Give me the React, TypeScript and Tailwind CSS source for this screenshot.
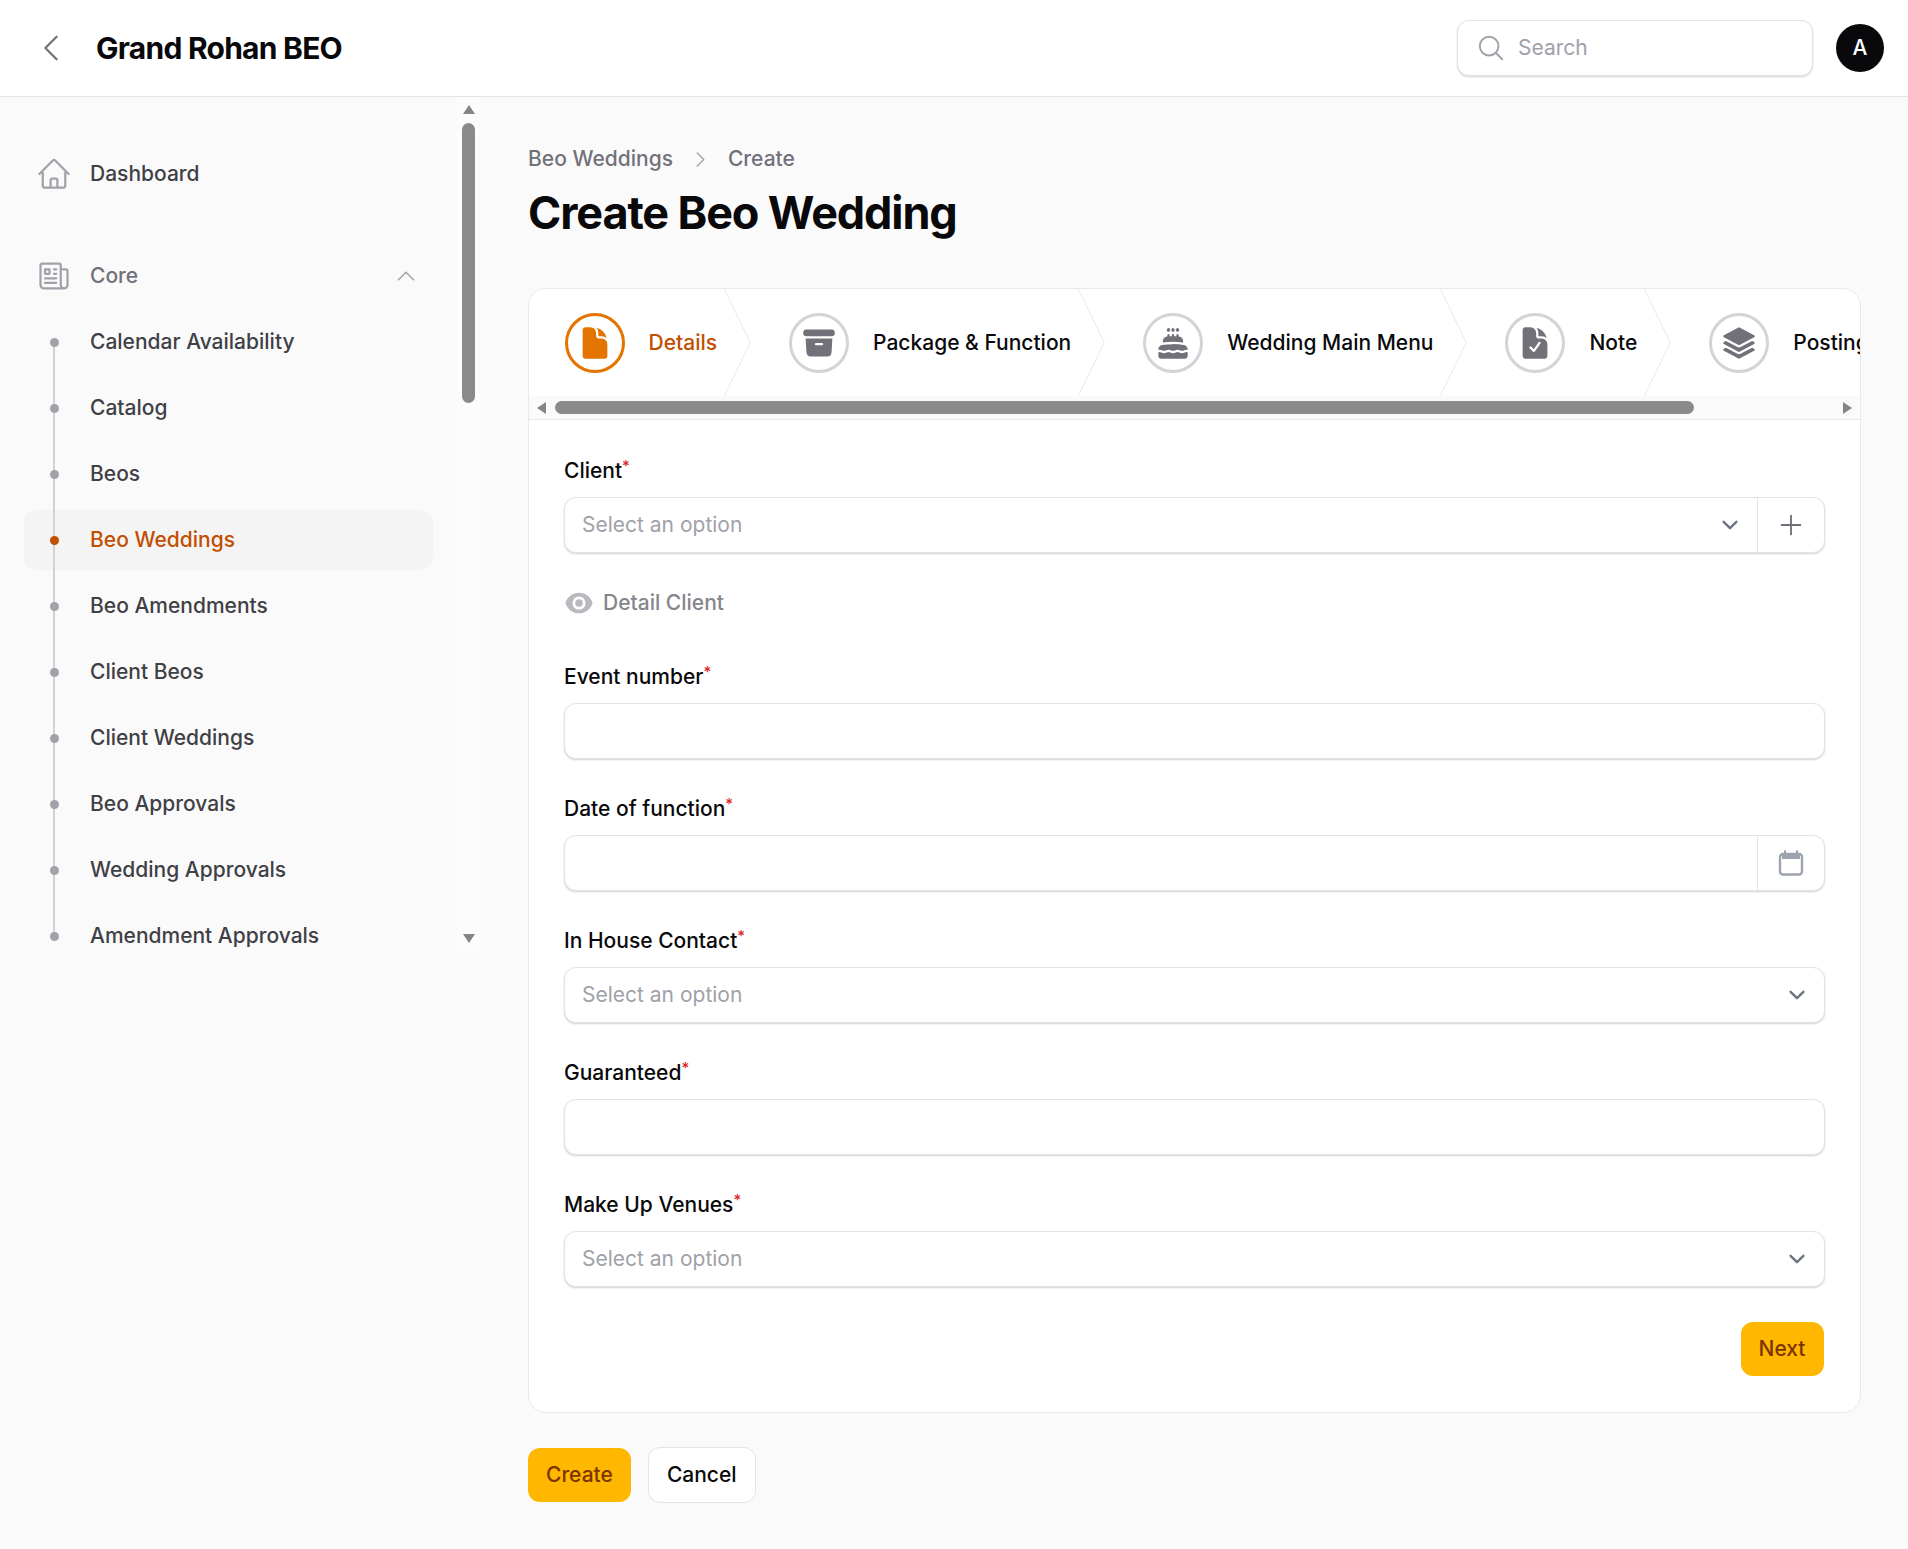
import type { ComponentType, ReactNode } from "react";
import {
  HiOutlineChevronLeft,
  HiOutlineChevronRight,
  HiOutlineChevronUp,
  HiOutlineHome,
  HiOutlineMagnifyingGlass,
  HiOutlineNewspaper,
  HiOutlinePlus,
} from "react-icons/hi2";
import { HiArchiveBox, HiCake, HiDocument, HiDocumentCheck, HiEye, HiSquare3Stack3D } from "react-icons/hi2";

const coreItems = [
  "Calendar Availability",
  "Catalog",
  "Beos",
  "Beo Weddings",
  "Beo Amendments",
  "Client Beos",
  "Client Weddings",
  "Beo Approvals",
  "Wedding Approvals",
  "Amendment Approvals",
];

const steps: { label: string; icon: ComponentType<{ size?: number; className?: string }> }[] = [
  { label: "Details", icon: HiDocument },
  { label: "Package & Function", icon: HiArchiveBox },
  { label: "Wedding Main Menu", icon: HiCake },
  { label: "Note", icon: HiDocumentCheck },
  { label: "Posting", icon: HiSquare3Stack3D },
];

const Triangle = ({ dir }: { dir: "up" | "down" | "left" | "right" }) => {
  const points = {
    up: "6,0 12,9 0,9",
    down: "0,0 12,0 6,9",
    left: "9,0 9,12 0,6",
    right: "0,0 9,6 0,12",
  }[dir];
  const vertical = dir === "up" || dir === "down";
  return (
    <svg width={vertical ? 12 : 9} height={vertical ? 9 : 12} viewBox={vertical ? "0 0 12 9" : "0 0 9 12"} className="shrink-0">
      <polygon points={points} fill="#858585" />
    </svg>
  );
};

const SelectChevron = () => (
  <svg width="32" height="32" viewBox="0 0 20 20" fill="none" className="shrink-0">
    <path d="m6 8 4 4 4-4" stroke="#6b7280" strokeWidth="1.5" strokeLinecap="round" strokeLinejoin="round" />
  </svg>
);

const CalendarIcon = () => (
  <svg width="30" height="30" viewBox="0 0 30 30" fill="none">
    <path d="M9 3v4M21 3v4" stroke="#9ca3af" strokeWidth="2" strokeLinecap="round" />
    <path d="M6 11V8a2.5 2.5 0 0 1 2.5-2.5h13A2.5 2.5 0 0 1 24 8v3Z" fill="#9ca3af" />
    <rect x="4" y="6" width="22" height="20.5" rx="3" stroke="#9ca3af" strokeWidth="2.4" />
  </svg>
);

const Label = ({ children }: { children: ReactNode }) => (
  <label className="block h-[30px] pt-[1px] leading-[30px] text-[21px] font-medium text-[#09090b]">
    {children}
    <sup className="text-[15px] font-medium text-[#dc2626]">*</sup>
  </label>
);

const Box = ({ children }: { children?: ReactNode }) => (
  <div className="mt-3 flex h-[56px] items-center overflow-hidden rounded-[12px] border-[1.5px] border-[#e4e4e7] bg-white shadow-[0_1px_2px_rgba(0,0,0,0.18)]">
    {children}
  </div>
);

const SelectBox = ({ suffix }: { suffix?: ReactNode }) => (
  <Box>
    <span className="flex-1 pl-[17px] text-[21px] text-[#a1a1aa]">Select an option</span>
    <span className="pr-[11px]">
      <SelectChevron />
    </span>
    {suffix}
  </Box>
);

const Suffix = ({ children }: { children: ReactNode }) => (
  <span className="flex h-full w-[67px] shrink-0 items-center justify-center border-l border-[#e4e4e7]">{children}</span>
);

const App = () => {
  return (
    <div className="min-h-[1549px] bg-[#fafafa] font-['Inter',sans-serif]">
      <header className="flex h-[97px] items-center border-b border-[#e4e4e7] bg-white pl-[33px] pr-6">
        <HiOutlineChevronLeft size={36} className="text-[#71717a]" />
        <span className="ml-[27px] flex-1 text-[30px] font-bold tracking-tight text-[#09090b]">Grand Rohan BEO</span>
        <div className="flex h-[56px] w-[356px] items-center rounded-[12px] border-[1.5px] border-[#e4e4e7] bg-white pl-[18px] shadow-[0_1px_2px_rgba(0,0,0,0.18)]">
          <HiOutlineMagnifyingGlass size={30} className="text-[#a1a1aa]" />
          <span className="ml-[12px] text-[21px] text-[#a1a1aa]">Search</span>
        </div>
        <div className="ml-[23px] flex h-12 w-12 items-center justify-center rounded-full bg-[#09090b] text-[21px] font-medium text-white">A</div>
      </header>

      <div className="flex">
        <aside className="flex h-[856px] w-[480px] shrink-0">
          <nav className="w-[457px] px-6 pt-[47px]">
            <a className="flex h-[60px] items-center gap-[18px] pl-3 text-[21px] font-medium text-[#3f3f46]">
              <HiOutlineHome size={36} className="text-[#a1a1aa]" />
              Dashboard
            </a>
            <div className="mt-[42px] flex h-[60px] items-center gap-[18px] pl-3 pr-[15px] text-[21px] font-medium text-[#71717a]">
              <HiOutlineNewspaper size={36} className="text-[#a1a1aa]" />
              <span className="flex-1">Core</span>
              <HiOutlineChevronUp size={24} className="text-[#a1a1aa]" />
            </div>
            <ul className="mt-[6px] flex flex-col gap-[6px]">
              {coreItems.map((item, i) => {
                const active = item === "Beo Weddings";
                const first = i === 0;
                const last = i === coreItems.length - 1;
                return (
                  <li
                    key={item}
                    className={`relative flex h-[60px] items-center rounded-[12px] pl-[66px] text-[21px] font-medium ${
                      active ? "bg-[#f4f4f5] text-[#c24e00]" : "text-[#3f3f46]"
                    }`}
                  >
                    <span
                      className={`absolute left-[29px] w-[2px] bg-[#d1d1d8] ${first ? "top-1/2" : "top-[-6px]"} ${
                        last ? "bottom-1/2" : "bottom-0"
                      }`}
                    />
                    <span className={`absolute left-[26px] top-[26px] h-[9px] w-[9px] rounded-full ${active ? "bg-[#c24e00]" : "bg-[#a1a1aa]"}`} />
                    {item}
                  </li>
                );
              })}
            </ul>
          </nav>
          <div className="flex w-[23px] flex-col items-center bg-[#fcfcfc] pt-[8px] pb-[10px]">
            <Triangle dir="up" />
            <div className="mt-[9px] h-[280px] w-[13px] rounded-full bg-[#8a8a8a]" />
            <div className="flex-1" />
            <Triangle dir="down" />
          </div>
        </aside>

        <main className="min-w-0 flex-1 pl-12 pr-[47px] pt-[47px]">
          <div className="flex h-[30px] items-center text-[21px] font-medium text-[#71717a]">
            Beo Weddings
            <HiOutlineChevronRight size={21} className="mx-[17px] text-[#a1a1aa]" />
            Create
          </div>
          <h1 className="mt-[12px] text-[45px] leading-[54px] font-bold tracking-tight text-[#09090b]">Create Beo Wedding</h1>

          <section className="mt-[48px] overflow-hidden rounded-[18px] border-[1.5px] border-[#e9e9eb] bg-white">
            <div className="-ml-[0.5px] flex h-[107px] overflow-hidden">
              {steps.map((step, i) => {
                const Icon = step.icon;
                const active = i === 0;
                return (
                  <div key={step.label} className="relative flex shrink-0 items-center gap-6 px-9">
                    <span
                      className={`flex h-[60px] w-[60px] shrink-0 items-center justify-center rounded-full border-[3px] ${
                        active ? "border-[#e37400]" : "border-[#d4d4d8]"
                      }`}
                    >
                      <Icon size={36} className={active ? "text-[#e37400]" : "text-[#71717a]"} />
                    </span>
                    <span className={`whitespace-nowrap text-[21px] font-medium ${active ? "text-[#c24e00]" : "text-[#09090b]"}`}>{step.label}</span>
                    {i < steps.length - 1 && (
                      <svg viewBox="0 0 22 80" preserveAspectRatio="none" fill="none" className="absolute right-0 top-0 h-full w-[30px]">
                        <path d="M0 -2L20 40L0 82" stroke="#e9e9eb" strokeWidth="1" vectorEffect="non-scaling-stroke" />
                      </svg>
                    )}
                  </div>
                );
              })}
            </div>
            <div className="flex h-[23px] items-center bg-[#fafafa] pl-[8px] pr-[8px]">
              <Triangle dir="left" />
              <div className="ml-[9px] h-[13px] w-[1139px] rounded-full bg-[#8a8a8a]" />
              <div className="flex-1" />
              <Triangle dir="right" />
            </div>

            <div className="border-t-[1.5px] border-[#e9e9eb] pl-[35px] pr-[35.5px] pb-[36px] pt-[35px]">
              <Label>Client</Label>
              <SelectBox
                suffix={
                  <Suffix>
                    <HiOutlinePlus size={30} className="text-[#71717a]" />
                  </Suffix>
                }
              />
              <div className="mt-[35px] flex h-10 items-start gap-[9px] text-[21px] font-medium leading-[30px] text-[#85858c]">
                <HiEye size={30} className="text-[#b9b9c0]" />
                Detail Client
              </div>

              <div className="mt-[33px]">
                <Label>Event number</Label>
                <Box />
              </div>
              <div className="mt-[34px]">
                <Label>Date of function</Label>
                <Box>
                  <span className="flex-1" />
                  <Suffix>
                    <CalendarIcon />
                  </Suffix>
                </Box>
              </div>
              <div className="mt-[34px]">
                <Label>In House Contact</Label>
                <SelectBox />
              </div>
              <div className="mt-[34px]">
                <Label>Guaranteed</Label>
                <Box />
              </div>
              <div className="mt-[34px]">
                <Label>Make Up Venues</Label>
                <SelectBox />
              </div>

              <div className="mt-[35px] flex justify-end pr-[1px]">
                <button className="h-[54px] rounded-[12px] bg-[#ffb700] px-[18px] text-[21px] font-medium text-[#7c3400]">Next</button>
              </div>
            </div>
          </section>

          <div className="mt-[34px] flex items-center gap-[17px] pb-[46px]">
            <button className="h-[54px] rounded-[12px] bg-[#ffb700] px-[18px] text-[21px] font-medium text-[#7c3400]">Create</button>
            <button className="h-[56px] rounded-[12px] border-[1.5px] border-[#e4e4e7] bg-white px-[18px] text-[21px] font-medium text-[#09090b]">Cancel</button>
          </div>
        </main>
      </div>
    </div>
  );
};

export default App;
